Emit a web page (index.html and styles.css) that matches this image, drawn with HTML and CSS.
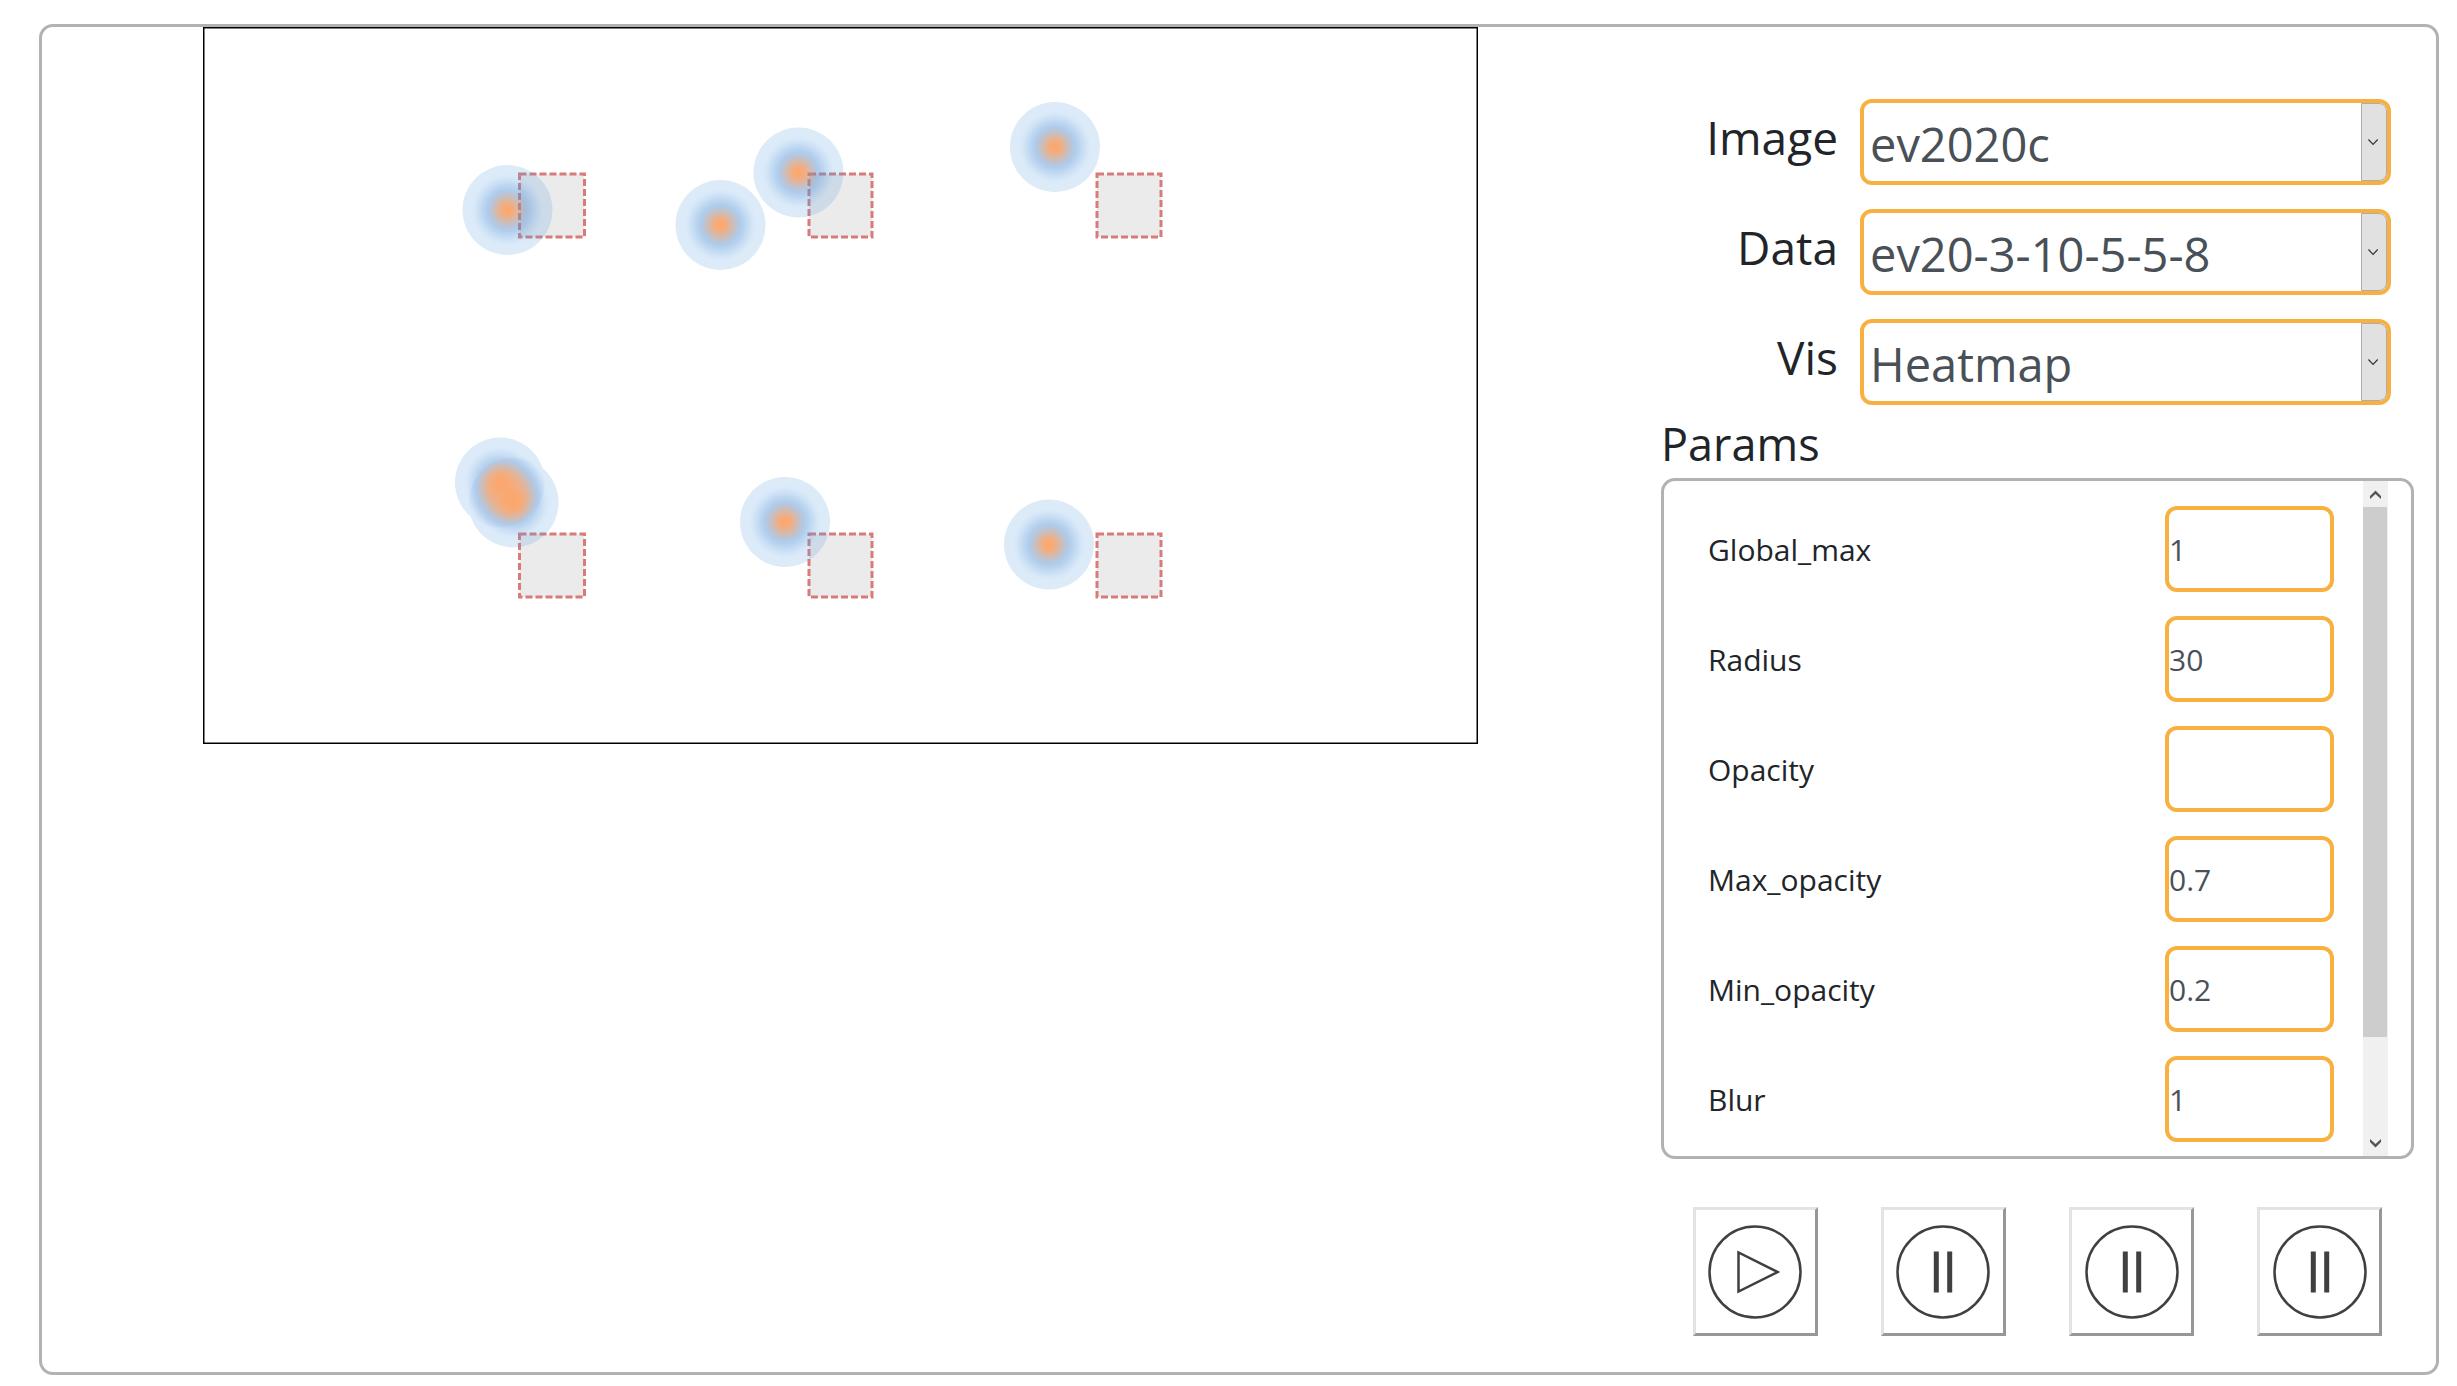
FILE: index.html
```html
<!DOCTYPE html>
<html lang="en">
<head>
<meta charset="utf-8">
<title>Heatmap viewer</title>
<link rel="stylesheet" href="styles.css">
</head>
<body>
<main class="frame">
  <section class="stage">
    <svg class="stage-canvas" viewBox="0 0 1275 717" role="img" aria-label="Heatmap">
      <defs>
        <radialGradient id="point">
          <stop offset="0" stop-color="#000" stop-opacity="1"/>
          <stop offset="1" stop-color="#000" stop-opacity=".1"/>
        </radialGradient>
        <!-- Turns accumulated density (alpha) into the blue-orange palette -->
        <filter id="palette" filterUnits="userSpaceOnUse" x="0" y="0" width="1275" height="717" color-interpolation-filters="sRGB">
          <feColorMatrix values="0 0 0 1 0  0 0 0 1 0  0 0 0 1 0  0 0 0 1 0"/>
          <feComponentTransfer>
            <feFuncR type="table" tableValues=".33 .33 .33 .33 .33 .33 .35 .56 .79 .95 .99"/>
            <feFuncG type="table" tableValues=".61 .61 .61 .61 .6 .59 .58 .56 .53 .51 .5"/>
            <feFuncB type="table" tableValues=".88 .88 .88 .88 .87 .86 .84 .62 .38 .22 .16"/>
            <feFuncA type="table" tableValues="0 .2 .2 .21 .29 .39 .48 .55 .61 .67 .7"/>
          </feComponentTransfer>
        </filter>
      </defs>
      <rect class="stage-border" x=".75" y=".75" width="1273.5" height="715.5"/>
      <g class="targets">
        <rect x="316.500" y="147" width="65" height="63"/>
        <rect x="606" y="147" width="63" height="63"/>
        <rect x="894" y="147" width="64" height="63"/>
        <rect x="316.500" y="507" width="65" height="63"/>
        <rect x="606" y="507" width="63" height="63"/>
        <rect x="894" y="507" width="64" height="63"/>
      </g>
      <g fill="url(#point)" filter="url(#palette)">
        <circle cx="304.500" cy="183" r="45"/>
        <circle cx="517.500" cy="198" r="45"/>
        <circle cx="595.500" cy="145.500" r="45"/>
        <circle cx="852" cy="120" r="45"/>
        <circle cx="297" cy="455.500" r="45"/>
        <circle cx="310.500" cy="475.500" r="45"/>
        <circle cx="582" cy="495" r="45"/>
        <circle cx="846" cy="517.500" r="45"/>
      </g>
    </svg>
  </section>

  <section class="side">
    <form class="choices">
      <label class="choice-label" for="image">Image</label>
      <div class="choice">
        <select id="image"><option>ev2020c</option></select>
        <svg class="choice-arrow" viewBox="0 0 26 78" preserveAspectRatio="none" aria-hidden="true"><path d="M7 36.500l5 5 5-5"/></svg>
      </div>
      <label class="choice-label" for="data">Data</label>
      <div class="choice">
        <select id="data"><option>ev20-3-10-5-5-8</option></select>
        <svg class="choice-arrow" viewBox="0 0 26 78" preserveAspectRatio="none" aria-hidden="true"><path d="M7 36.500l5 5 5-5"/></svg>
      </div>
      <label class="choice-label" for="vis">Vis</label>
      <div class="choice">
        <select id="vis"><option>Heatmap</option></select>
        <svg class="choice-arrow" viewBox="0 0 26 78" preserveAspectRatio="none" aria-hidden="true"><path d="M7 36.500l5 5 5-5"/></svg>
      </div>
    </form>

    <h2 class="params-title">Params</h2>
    <div class="params">
      <form class="params-list">
        <div class="param"><label for="global-max">Global_max</label><input id="global-max" type="text" value="1"></div>
        <div class="param"><label for="radius">Radius</label><input id="radius" type="text" value="30"></div>
        <div class="param"><label for="opacity">Opacity</label><input id="opacity" type="text" value=""></div>
        <div class="param"><label for="max-opacity">Max_opacity</label><input id="max-opacity" type="text" value="0.7"></div>
        <div class="param"><label for="min-opacity">Min_opacity</label><input id="min-opacity" type="text" value="0.2"></div>
        <div class="param"><label for="blur">Blur</label><input id="blur" type="text" value="1"></div>
      </form>
      <div class="scrollbar" aria-hidden="true">
        <svg class="scroll-arrow" viewBox="0 0 25 26"><path d="M7 18v-3l5.500-5.500L18 15v3l-5.500-5z"/></svg>
        <div class="scroll-track"><div class="scroll-thumb"></div></div>
        <svg class="scroll-arrow" viewBox="0 0 25 26"><path d="M7 9v3l5.500 5.500L18 12V9l-5.500 5z"/></svg>
      </div>
    </div>

    <div class="player">
      <button type="button" aria-label="Play">
        <svg class="icon" viewBox="-48 -48 96 96"><circle r="45.500"/><path d="M-16.500-19.500v39l39-19.500z"/></svg>
      </button>
      <button type="button" aria-label="Pause">
        <svg class="icon" viewBox="-48 -48 96 96"><circle r="45.500"/><path class="bars" d="M-6.700-20.500v41M6.700-20.500v41"/></svg>
      </button>
      <button type="button" aria-label="Pause">
        <svg class="icon" viewBox="-48 -48 96 96"><circle r="45.500"/><path class="bars" d="M-6.700-20.500v41M6.700-20.500v41"/></svg>
      </button>
      <button type="button" aria-label="Pause">
        <svg class="icon" viewBox="-48 -48 96 96"><circle r="45.500"/><path class="bars" d="M-6.700-20.500v41M6.700-20.500v41"/></svg>
      </button>
    </div>
  </section>
</main>
</body>
</html>
```
FILE: styles.css
```css
* {
  box-sizing: border-box;
}

body {
  margin: 0;
  padding: 24px 18px 12px 39px;
  background: #fff;
  color: #212529;
  font-family: "Open Sans", "Noto Sans", sans-serif;
  font-size: 30px;
}

.frame {
  display: grid;
  grid-template-columns: 1275fr 753fr;
  column-gap: 183px;
  min-height: calc(100vh - 36px);
  padding: 0 22px 0 161px;
  border: 3px solid #b2b2b2;
  border-radius: 14px;
}

.stage-canvas {
  display: block;
  width: 100%;
}

.stage-border {
  fill: none;
  stroke: #000;
  stroke-width: 1.5;
}

.targets {
  fill: #ebebeb;
  stroke: #d97b7b;
  stroke-width: 3;
  stroke-dasharray: 7 3;
}

.side {
  display: flex;
  flex-direction: column;
  padding-top: 72px;
}

.choices {
  display: grid;
  grid-template-columns: 1fr 3fr;
  gap: 24px 22px;
  align-items: center;
  padding-right: 23px;
}

.choice-label {
  padding-bottom: 10px;
  font-size: 46px;
  line-height: 64px;
  text-align: right;
}

.choice {
  position: relative;
}

.choice select,
.param input {
  display: block;
  height: 86px;
  border: 4px solid #f8b041;
  border-radius: 12px;
  background: #fff;
  color: #495057;
  font-family: inherit;
}

.choice select {
  width: 100%;
  padding: 4px 30px 0 6px;
  appearance: none;
  font-size: 47px;
}

.choice-arrow {
  position: absolute;
  top: 4px;
  right: 4px;
  width: 26px;
  height: 78px;
  border: 1px solid #acacac;
  border-radius: 0 8px 8px 0;
  background: #e1e1e1;
  fill: none;
  stroke: #333;
  stroke-width: 1.3;
  pointer-events: none;
}

.params-title {
  margin: 7px 0 2px;
  font-size: 45px;
  font-weight: 400;
  line-height: 64px;
}

.params {
  display: flex;
  padding-right: 23px;
  border: 3px solid #b2b2b2;
  border-radius: 14px;
}

.params-list {
  display: flex;
  flex: 1;
  flex-direction: column;
  gap: 24px;
  padding: 25px 29px 14px 44px;
}

.param {
  display: flex;
  align-items: center;
  justify-content: space-between;
}

.param input {
  width: 169px;
  padding: 0;
  font-size: 30px;
}

.scrollbar {
  display: flex;
  flex-direction: column;
  width: 25px;
  background: #f0f0f0;
}

.scroll-arrow {
  display: block;
  height: 26px;
  fill: #555;
}

.scroll-track {
  flex: 1;
}

.scroll-thumb {
  width: 24px;
  height: 85%;
  background: #cdcdcd;
}

.player {
  display: grid;
  grid-template-columns: repeat(4, 1fr);
  justify-items: center;
  padding: 48px 0 36px;
}

.player button {
  display: flex;
  align-items: center;
  justify-content: center;
  width: 125px;
  height: 129px;
  padding: 0;
  border: 3px solid;
  border-color: #e3e3e3 #979797 #979797 #e3e3e3;
  background: #fff;
}

.icon {
  width: 96px;
  height: 96px;
  fill: none;
  stroke: #404040;
  stroke-width: 2.5;
}

.icon .bars {
  stroke-width: 5;
}
```
